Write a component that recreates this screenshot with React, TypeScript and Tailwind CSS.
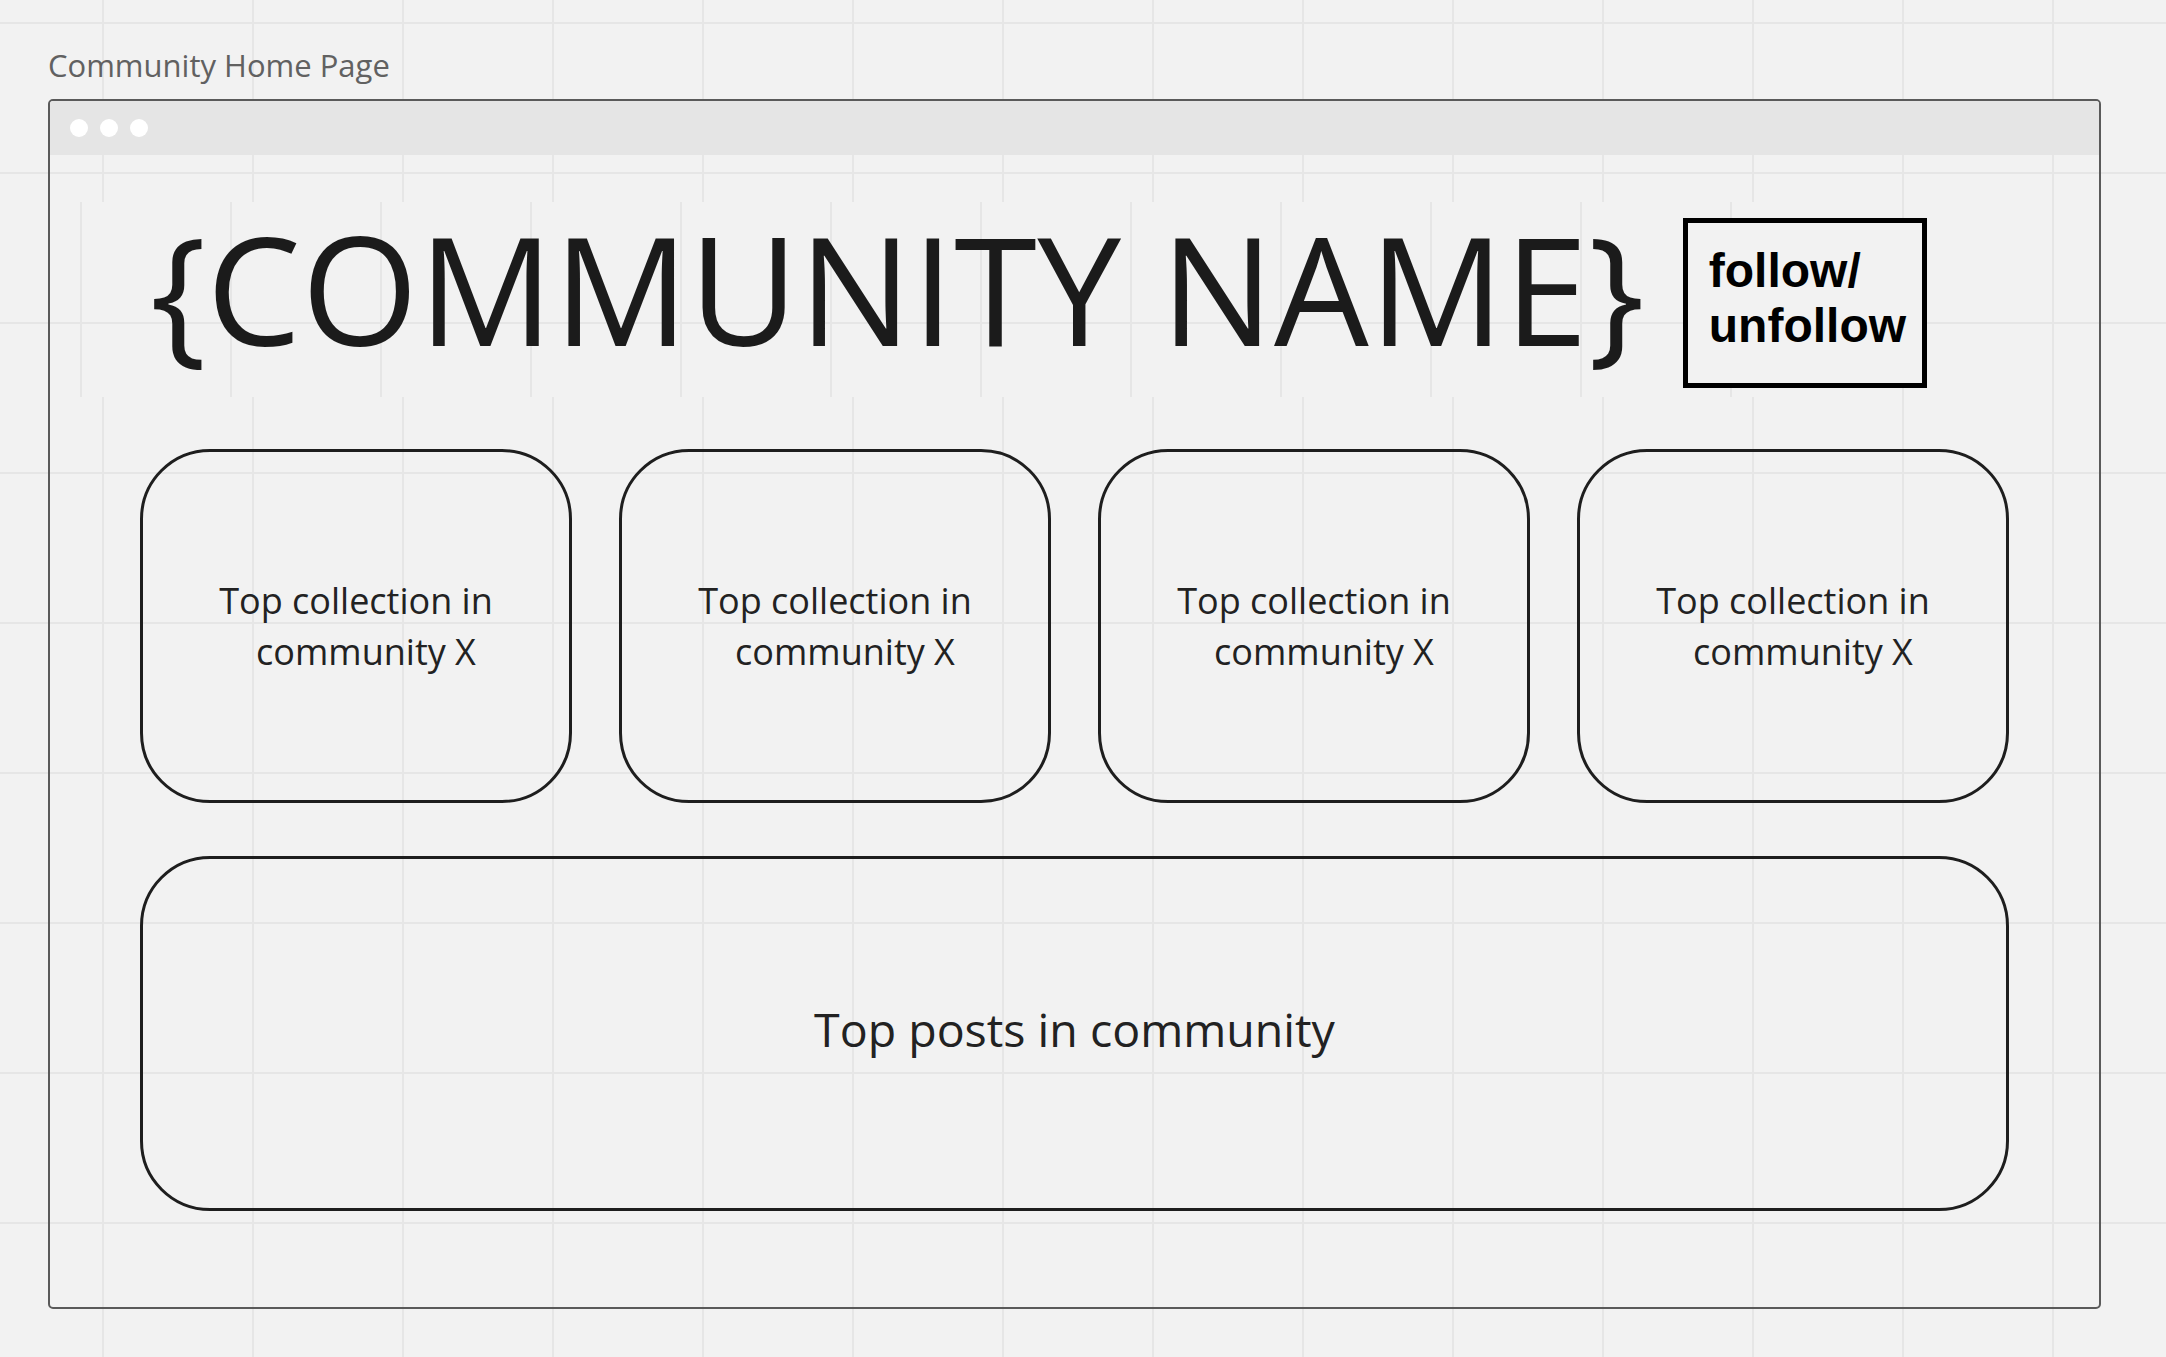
const gridLines =
  "[background-image:linear-gradient(to_right,#e6e6e6_2px,transparent_2px),linear-gradient(to_bottom,#e6e6e6_2px,transparent_2px)] [background-size:150px_150px]";

function CollectionCard() {
  return (
    <div className="flex h-[354px] flex-col items-center justify-center rounded-[70px] border-[3px] border-[#1e1e1e] text-[36px] leading-[51px] text-[#222]">
      <span>Top collection in</span>
      <span className="pl-[20px]">community X</span>
    </div>
  );
}

export default function App() {
  return (
    <div
      className={`h-[1357px] w-full overflow-hidden bg-[#f2f2f2] ${gridLines} [background-position:102px_22px] pl-[48px] pt-[44px] font-['Open_Sans',sans-serif]`}
    >
      <div className="h-[42px] text-[31px] leading-[42px] text-[#616161]">Community Home Page</div>

      {/* window frame */}
      <div className="mt-[13px] flex h-[1210px] w-[2053px] flex-col rounded-[5px] border-2 border-[#5a5a5a]">
        <div className="flex h-[54px] shrink-0 items-center gap-[12px] rounded-t-[3px] bg-[#e5e5e5] pl-[20px]">
          <span className="h-[18px] w-[18px] rounded-full bg-white" />
          <span className="h-[18px] w-[18px] rounded-full bg-white" />
          <span className="h-[18px] w-[18px] rounded-full bg-white" />
        </div>

        <div className="flex h-[294px] shrink-0 items-start pl-[20px] pt-[47px]">
          <div
            className={`flex h-[195px] w-[1720px] items-start bg-[#f2f2f2] ${gridLines} [background-position:10px_120px]`}
          >
            <h1 className="ml-[80px] mt-[11px] whitespace-nowrap text-[150px] leading-[150px] font-normal tracking-[0.35px] text-[#1b1b1b]">
              {"{COMMUNITY NAME}"}
            </h1>
            <button className="ml-[38px] mt-[16px] flex h-[170px] w-[244px] shrink-0 flex-col items-start border-[5px] border-black bg-[#f2f2f2] pl-[21px] pt-[20px] text-left font-['Liberation_Sans',Arial,sans-serif] text-[48px] font-bold leading-[55px] text-black">
              <span>follow/</span>
              <span>unfollow</span>
            </button>
          </div>
        </div>

        <div className="px-[90px]">
          <div className="grid grid-cols-4 gap-[47px]">
            <CollectionCard />
            <CollectionCard />
            <CollectionCard />
            <CollectionCard />
          </div>
          <div className="mt-[53px] flex h-[355px] items-center justify-center rounded-[70px] border-[3px] border-[#1e1e1e] pb-[8px] text-[46.5px] text-[#222]">
            Top posts in community
          </div>
        </div>
      </div>
    </div>
  );
}
